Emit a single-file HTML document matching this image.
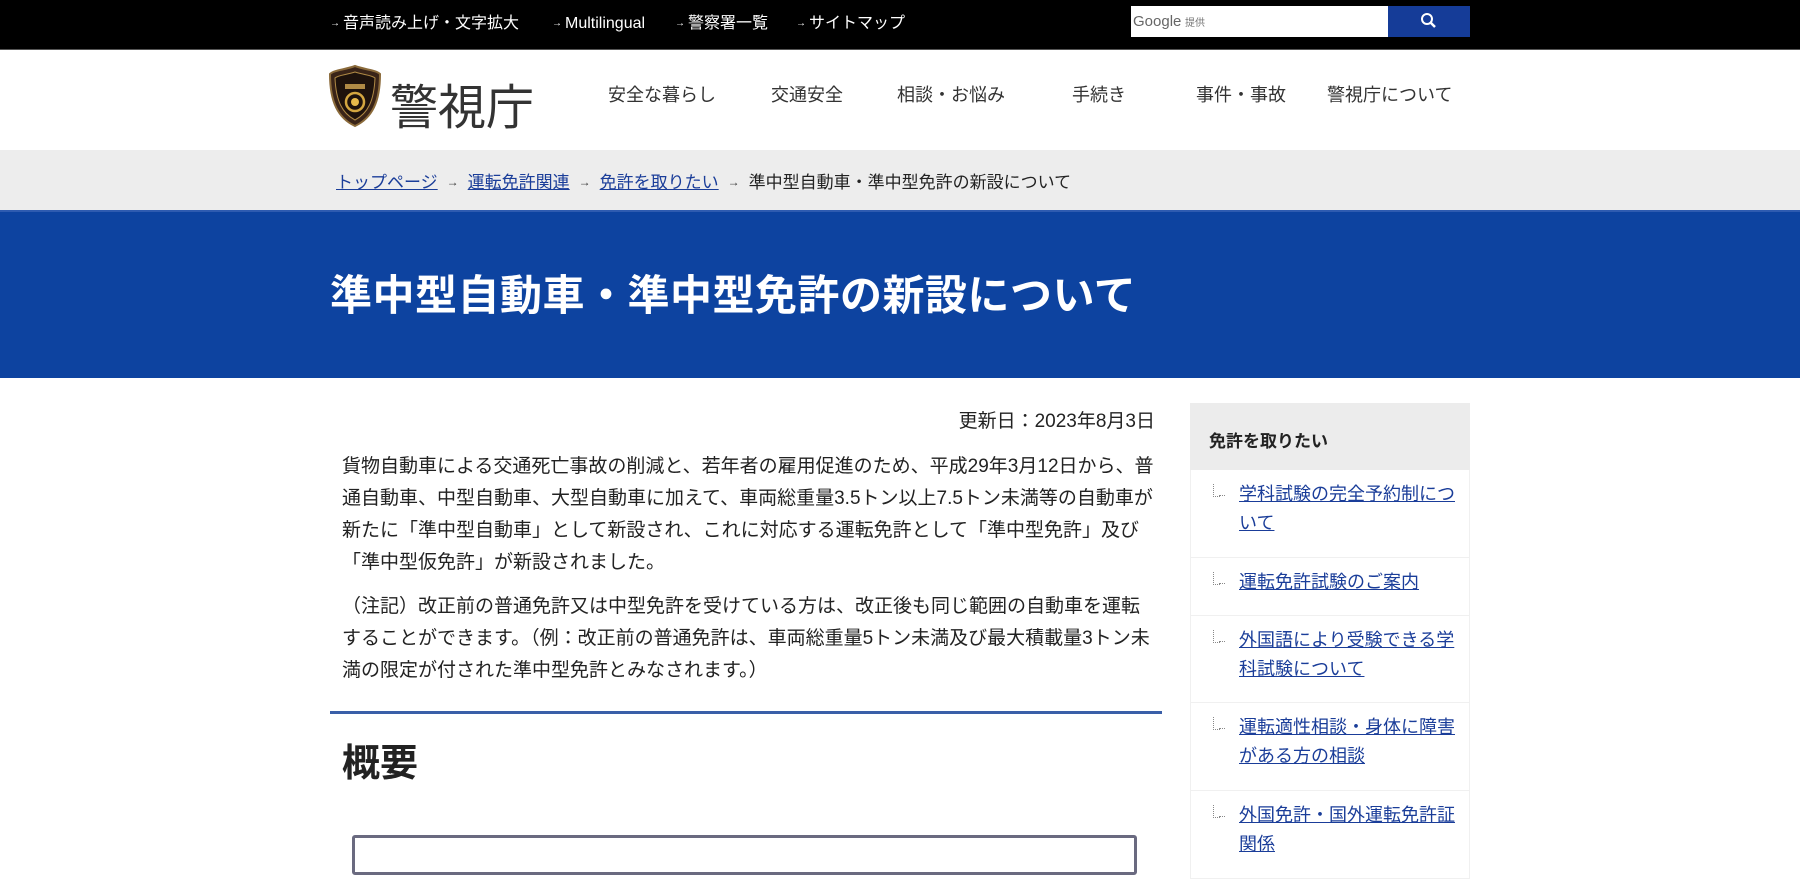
<!DOCTYPE html>
<html><head><meta charset="utf-8">
<style>
*{margin:0;padding:0;box-sizing:border-box}
body{width:1800px;height:859px;overflow:hidden;background:#fff;font-family:"Liberation Sans","Noto Sans CJK JP",sans-serif;color:#222}
.top{position:absolute;left:0;top:0;width:1800px;height:50px;background:#000;border-bottom:1px solid #555}
.top a{position:absolute;top:13px;color:#fff;font-size:16px;line-height:22px;text-decoration:none;white-space:nowrap}
.top a i{font-style:normal;font-size:10px;margin-right:3px;display:inline-block;vertical-align:top;line-height:22px}
.search{position:absolute;left:1131px;top:6px;width:257px;height:31px;background:#fff;font-size:13px;color:#777;padding:7px 2px}
.sbtn{position:absolute;left:1388px;top:6px;width:82px;height:31px;background:#153c98}
.hdr{position:absolute;left:0;top:50px;width:1800px;height:100px;background:#fff}
.nav{position:absolute;top:31px;font-size:18px;color:#333;white-space:nowrap}
.bc{position:absolute;left:0;top:150px;width:1800px;height:60px;background:#ededed;font-size:17px;white-space:nowrap}
.bc .in{position:absolute;top:18px;left:336px}
.bc a{color:#1a3d99;text-decoration:underline}
.arr{font-size:12px;color:#333;margin:0 9px;vertical-align:2px}
.blue{position:absolute;left:0;top:210px;width:1800px;height:168px;background:#0d43a0;border-top:2px solid #2e5bb0}
.blue h1{position:absolute;left:330px;top:50px;color:#fff;font-size:42px;font-weight:bold;white-space:nowrap;letter-spacing:0.5px}
.p{position:absolute;left:342px;font-size:19px;line-height:32px;color:#222;white-space:nowrap}
.side{position:absolute;left:1190px;top:403px;width:280px}
.sh{height:67px;background:#ececec;font-size:17px;font-weight:bold;padding:24px 19px}
.it{border:1px solid #f0f0f0;border-top:none;padding:10px 10px 12px 48px;position:relative;font-size:18px;line-height:29px;background:#fff}
.it a{color:#1a3d99;text-decoration:underline}
.it:before{content:"";position:absolute;left:22px;top:14px;width:6px;height:12px;border-left:1px dotted #888;border-bottom:1px dotted #888}
.it:after{content:"";position:absolute;left:28px;top:25px;width:6px;border-bottom:1px dotted #888}
</style></head><body>
<div class="top">
<a style="left:330px"><i>→</i>音声読み上げ・文字拡大</a>
<a style="left:552px"><i>→</i>Multilingual</a>
<a style="left:675px"><i>→</i>警察署一覧</a>
<a style="left:796px"><i>→</i>サイトマップ</a>
<div class="search"><span style="font-size:15px;color:#666">Google</span> <span style="font-size:10px">提供</span></div>
<div class="sbtn"><svg width="82" height="31"><circle cx="39" cy="13" r="5" fill="none" stroke="#fff" stroke-width="2"/><line x1="42.5" y1="16.5" x2="47" y2="21" stroke="#fff" stroke-width="2.5"/></svg></div>
</div>
<div class="hdr">
<svg style="position:absolute;left:328px;top:14px" width="54" height="64" viewBox="0 0 54 64">
<path d="M27 2 C38 6 48 6 52 10 C52 38 44 54 27 62 C10 54 2 38 2 10 C6 6 16 6 27 2Z" fill="#3a2418" stroke="#8a6a3a" stroke-width="2"/>
<path d="M27 8 C36 11 44 11 47 14 C46 37 40 49 27 56 C14 49 8 37 7 14 C10 11 18 11 27 8Z" fill="#1e120c" stroke="#b08a45" stroke-width="1"/>
<circle cx="27" cy="38" r="9" fill="none" stroke="#d4a640" stroke-width="2.5"/>
<circle cx="27" cy="38" r="4" fill="#e8b94a"/>
<rect x="17" y="20" width="20" height="5" fill="#b08a45"/>
</svg>
<div style="position:absolute;left:390px;top:18px;font-size:48px;color:#333;white-space:nowrap">警視庁</div>
<div class="nav" style="left:608px">安全な暮らし</div>
<div class="nav" style="left:771px">交通安全</div>
<div class="nav" style="left:897px">相談・お悩み</div>
<div class="nav" style="left:1072px">手続き</div>
<div class="nav" style="left:1196px">事件・事故</div>
<div class="nav" style="left:1327px">警視庁について</div>
</div>
<div class="bc"><div class="in"><a>トップページ</a><span class="arr">→</span><a>運転免許関連</a><span class="arr">→</span><a>免許を取りたい</a><span class="arr">→</span>準中型自動車・準中型免許の新設について</div></div>
<div class="blue"><h1>準中型自動車・準中型免許の新設について</h1></div>
<div class="p" style="left:auto;right:645px;top:406px">更新日：2023年8月3日</div>
<div class="p" style="top:451px">貨物自動車による交通死亡事故の削減と、若年者の雇用促進のため、平成29年3月12日から、普<br>通自動車、中型自動車、大型自動車に加えて、車両総重量3.5トン以上7.5トン未満等の自動車が<br>新たに「準中型自動車」として新設され、これに対応する運転免許として「準中型免許」及び<br>「準中型仮免許」が新設されました。</div>
<div class="p" style="top:591px">（注記）改正前の普通免許又は中型免許を受けている方は、改正後も同じ範囲の自動車を運転<br>することができます。（例：改正前の普通免許は、車両総重量5トン未満及び最大積載量3トン未<br>満の限定が付された準中型免許とみなされます。）</div>
<div style="position:absolute;left:330px;top:711px;width:832px;height:3px;background:#3a5fa8"></div>
<div style="position:absolute;left:342px;top:732px;font-size:38px;font-weight:bold;color:#222">概要</div>
<div style="position:absolute;left:352px;top:835px;width:785px;height:40px;border:3px solid #6a6a80;border-radius:3px"></div>
<div class="side">
<div class="sh">免許を取りたい</div>
<div class="it" style="height:88px"><a>学科試験の完全予約制について</a></div>
<div class="it" style="height:58px"><a>運転免許試験のご案内</a></div>
<div class="it" style="height:87px"><a>外国語により受験できる学科試験について</a></div>
<div class="it" style="height:88px"><a>運転適性相談・身体に障害がある方の相談</a></div>
<div class="it" style="height:88px"><a>外国免許・国外運転免許証関係</a></div>
</div>
</body></html>
